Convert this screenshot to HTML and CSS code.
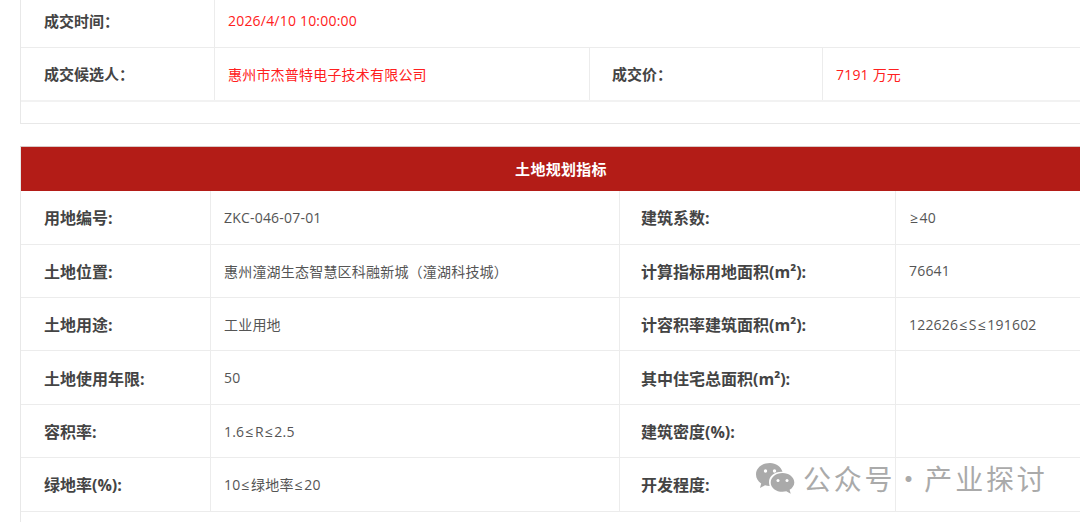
FILE: index.html
```html
<!DOCTYPE html>
<html lang="zh-CN">
<head>
<meta charset="utf-8">
<title>土地规划指标</title>
<link rel="stylesheet" href="styles.css">
</head>
<body>
<main class="page">
  <section class="panel result">
    <div class="rows">
      <div class="row row-result-a">
        <div class="cell label">成交时间：</div>
        <div class="cell value red">2026/4/10 10:00:00</div>
      </div>
      <div class="row row-result-b">
        <div class="cell label">成交候选人：</div>
        <div class="cell value red">惠州市杰普特电子技术有限公司</div>
        <div class="cell label side">成交价：</div>
        <div class="cell value red">7191 万元</div>
      </div>
    </div>
  </section>
  <section class="panel plan">
    <h2 class="title">土地规划指标</h2>
    <div class="row row-plan"><div class="cell label">用地编号:</div><div class="cell value">ZKC-046-07-01</div><div class="cell label side">建筑系数:</div><div class="cell value"><span class="op">≥</span>40</div></div>
    <div class="row row-plan"><div class="cell label">土地位置:</div><div class="cell value">惠州潼湖生态智慧区科融新城（潼湖科技城）</div><div class="cell label side">计算指标用地面积(m²):</div><div class="cell value">76641</div></div>
    <div class="row row-plan"><div class="cell label">土地用途:</div><div class="cell value">工业用地</div><div class="cell label side">计容积率建筑面积(m²):</div><div class="cell value"><span>122626<span class="op">≤</span>S<span class="op">≤</span>191602</span></div></div>
    <div class="row row-plan"><div class="cell label">土地使用年限:</div><div class="cell value">50</div><div class="cell label side">其中住宅总面积(m²):</div><div class="cell value"></div></div>
    <div class="row row-plan"><div class="cell label">容积率:</div><div class="cell value"><span>1.6<span class="op">≤</span>R<span class="op">≤</span>2.5</span></div><div class="cell label side">建筑密度(%):</div><div class="cell value"></div></div>
    <div class="row row-plan"><div class="cell label">绿地率(%):</div><div class="cell value"><span>10<span class="op">≤</span>绿地率<span class="op">≤</span>20</span></div><div class="cell label side">开发程度:</div><div class="cell value"></div></div>
  </section>
</main>
<div class="watermark">
  <svg class="wechat" viewBox="0 0 40 32" width="40" height="32" aria-hidden="true">
    <path class="wx" d="M15 1C7 1 1 6 1 12.500c0 3.700 2 6.800 5.200 8.900L5 26l5-2.700c1.600.4 3 .6 4.700.6-.5-1.300-.7-2.400-.7-3.700C14 14 20 9.300 27.500 9.800 26 4.800 21 1 15 1Z"/>
    <path class="wx" d="M27.500 11C21 11 15.700 15.200 15.700 20.400s5.300 9.400 11.800 9.400c1.300 0 2.600-.2 3.800-.5l4.400 2.400-1.100-3.900c2.800-1.800 4.700-4.500 4.700-7.400C39.300 15.200 34 11 27.500 11Z"/>
    <circle class="eye" cx="10.500" cy="9" r="1.700"/><circle class="eye" cx="19.500" cy="9" r="1.700"/>
    <circle class="eye" cx="23" cy="18.500" r="1.500"/><circle class="eye" cx="32" cy="18.500" r="1.500"/>
  </svg>
  <span class="wm-text">公众号 · 产业探讨</span>
</div>
</body>
</html>
```
FILE: styles.css
```css
* { box-sizing: border-box; }
html, body { margin: 0; height: 522px; overflow: hidden; background: #fff; }
body { font-family: "Open Sans", "Noto Sans CJK SC", sans-serif; color: #555; font-size: 14px; }
.page { width: 1300px; margin-top: -5px; padding-left: 20px; }
.panel { border: 1px solid #e8e8e8; border-top: 0; }
.result { height: 129px; }
.rows { border-bottom: 2px solid #f2f2f2; }
.plan { margin-top: 22px; border-top: 1px solid #d8c8c6; height: 400px; }
.title { margin: 0; height: 44.3px; background: #b31c17; color: #fff; font-size: 15px; letter-spacing: .3px; line-height: 44px; font-weight: 700; text-align: center; width: 1080px; }
.row { display: grid; align-items: stretch; border-bottom: 1px solid #ececec; }
.row-result-a { grid-template-columns: 194px 1fr; height: 53px; }
.row-result-a .cell, .row-result-b .cell { padding-bottom: 1px; }
.row-result-b { grid-template-columns: 194px 375px 233px 1fr; height: 52px; border-bottom: 0; }
.row-plan { grid-template-columns: 190px 409px 276px 1fr; height: 53.4px; }
.cell { display: flex; align-items: center; border-right: 1px solid #ececec; min-width: 0; }
.cell:last-child { border-right: 0; }
.label { padding-left: 23px; font-size: 15px; font-weight: 700; color: #444; }
.label.side { padding-left: 22px; }
.row-plan .label { font-size: 16px; }
.row-plan .label.side { padding-left: 21px; }
.value { padding-left: 13px; color: #555; font-size: 14px; letter-spacing: .2px; }
.red { color: #ff2020; }
.op { margin: 0 1.2px; }
.watermark { position: absolute; left: 755px; top: 460px; display: flex; align-items: center; gap: 8px; color: #aaa; }
.wechat { flex: none; }
.wx { fill: #aaa; }
.eye { fill: #fff; }
.wm-text { font-family: "Noto Sans CJK SC", sans-serif; font-size: 28px; letter-spacing: 2.800px; word-spacing: -10px; white-space: pre; line-height: 36px; }
```
